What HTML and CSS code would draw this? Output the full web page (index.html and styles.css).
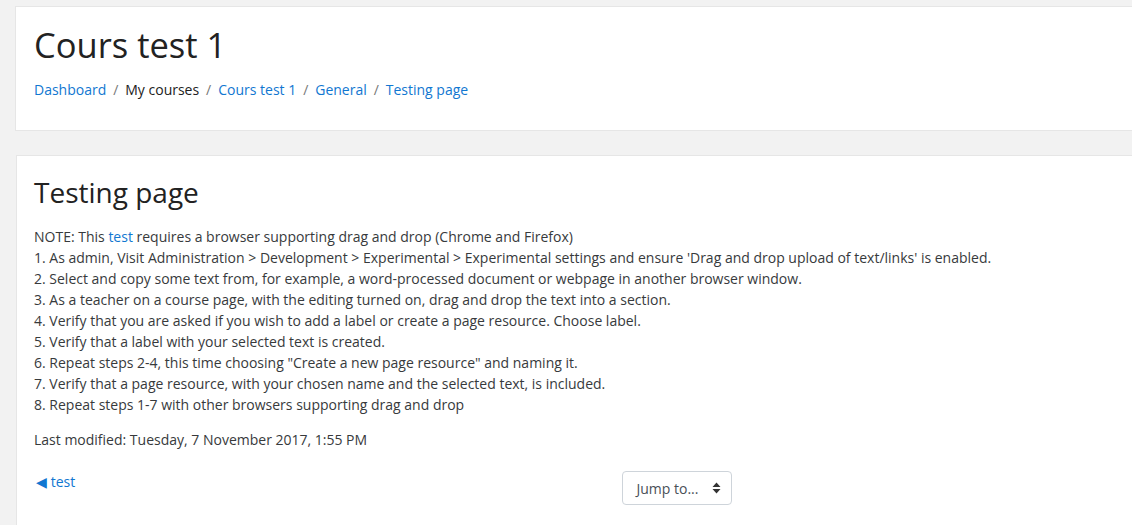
FILE: index.html
```html
<!DOCTYPE html>
<html lang="en">
<head>
  <meta charset="UTF-8" />
  <title>Testing page</title>
  <link rel="stylesheet" href="styles.css">
</head>
<body>
  <div class="page">
    <header class="card page-header">
      <h1>Cours test 1</h1>
      <nav class="breadcrumb">
        <a href="#">Dashboard</a>
        <span class="sep">/</span>
        <span>My courses</span>
        <span class="sep">/</span>
        <a href="#">Cours test 1</a>
        <span class="sep">/</span>
        <a href="#">General</a>
        <span class="sep">/</span>
        <a href="#">Testing page</a>
      </nav>
    </header>

    <div class="card main">
      <h2>Testing page</h2>
      <div class="content">
        <p>NOTE: This <a href="#">test</a> requires a browser supporting drag and drop (Chrome and Firefox)<br>
        1. As admin, Visit Administration &gt; Development &gt; Experimental &gt; Experimental settings and ensure 'Drag and drop upload of text/links' is enabled.<br>
        2. Select and copy some text from, for example, a word-processed document or webpage in another browser window.<br>
        3. As a teacher on a course page, with the editing turned on, drag and drop the text into a section.<br>
        4. Verify that you are asked if you wish to add a label or create a page resource. Choose label.<br>
        5. Verify that a label with your selected text is created.<br>
        6. Repeat steps 2-4, this time choosing "Create a new page resource" and naming it.<br>
        7. Verify that a page resource, with your chosen name and the selected text, is included.<br>
        8. Repeat steps 1-7 with other browsers supporting drag and drop</p>
      </div>
      <div class="modified">Last modified: Tuesday, 7 November 2017, 1:55 PM</div>

      <div class="activity-nav">
        <div class="col"><a href="#" class="prev">&#9664; test</a></div>
        <div class="col center">
          <div class="jump">
            <span>Jump to...</span>
            <svg width="9" height="12" viewBox="0 0 9 12"><path d="M4.5 0.5 L8.5 5 H0.5 Z M0.5 7 H8.5 L4.5 11.5 Z" fill="#333"/></svg>
          </div>
        </div>
        <div class="col"></div>
      </div>
    </div>
  </div>
</body>
</html>
```

FILE: styles.css
```css
html {
  overflow: hidden;
}
body {
  margin: 0;
  background-color: #f2f2f2;
  font-family: 'Open Sans', sans-serif;
  font-size: 14px;
  line-height: 21px;
  color: #373a3c;
}
a {
  color: #1177d1;
  text-decoration: none;
}
.page {
  width: 1400px;
  padding-top: 6px;
}
.card {
  background-color: white;
  border: 1px solid #e6e6e6;
}
.page-header {
  margin-left: 15px;
  height: 123px;
  padding: 0 18px;
}
.page-header h1 {
  margin: 14px 0 0;
  font-size: 34.5px;
  font-weight: 400;
  line-height: 48px;
  color: #222;
}
.breadcrumb {
  margin-top: 10px;
  color: #222;
}
.breadcrumb .sep {
  color: #777;
  padding: 0 3.3px;
}
.main {
  margin: 24px 0 0 16px;
  padding: 0 17px 60px;
}
.main h2 {
  margin: 16px 0 0;
  font-size: 28px;
  font-weight: 400;
  line-height: 40px;
  color: #222;
}
.content p {
  margin: 14px 0 0;
}
.modified {
  margin-top: 14px;
}
.activity-nav {
  display: flex;
  width: 1286px;
  margin-top: 21px;
}
.activity-nav .col {
  flex: 1;
}
.activity-nav .center {
  display: flex;
  justify-content: center;
}
.prev {
  font-size: 14px;
  padding-left: 2px;
}
.jump {
  display: flex;
  align-items: center;
  gap: 14px;
  height: 32px;
  padding: 0 10px 0 14px;
  margin-top: 0;
  border: 1px solid #ced4da;
  border-radius: 4px;
  color: #495057;
  font-size: 14px;
}
```
